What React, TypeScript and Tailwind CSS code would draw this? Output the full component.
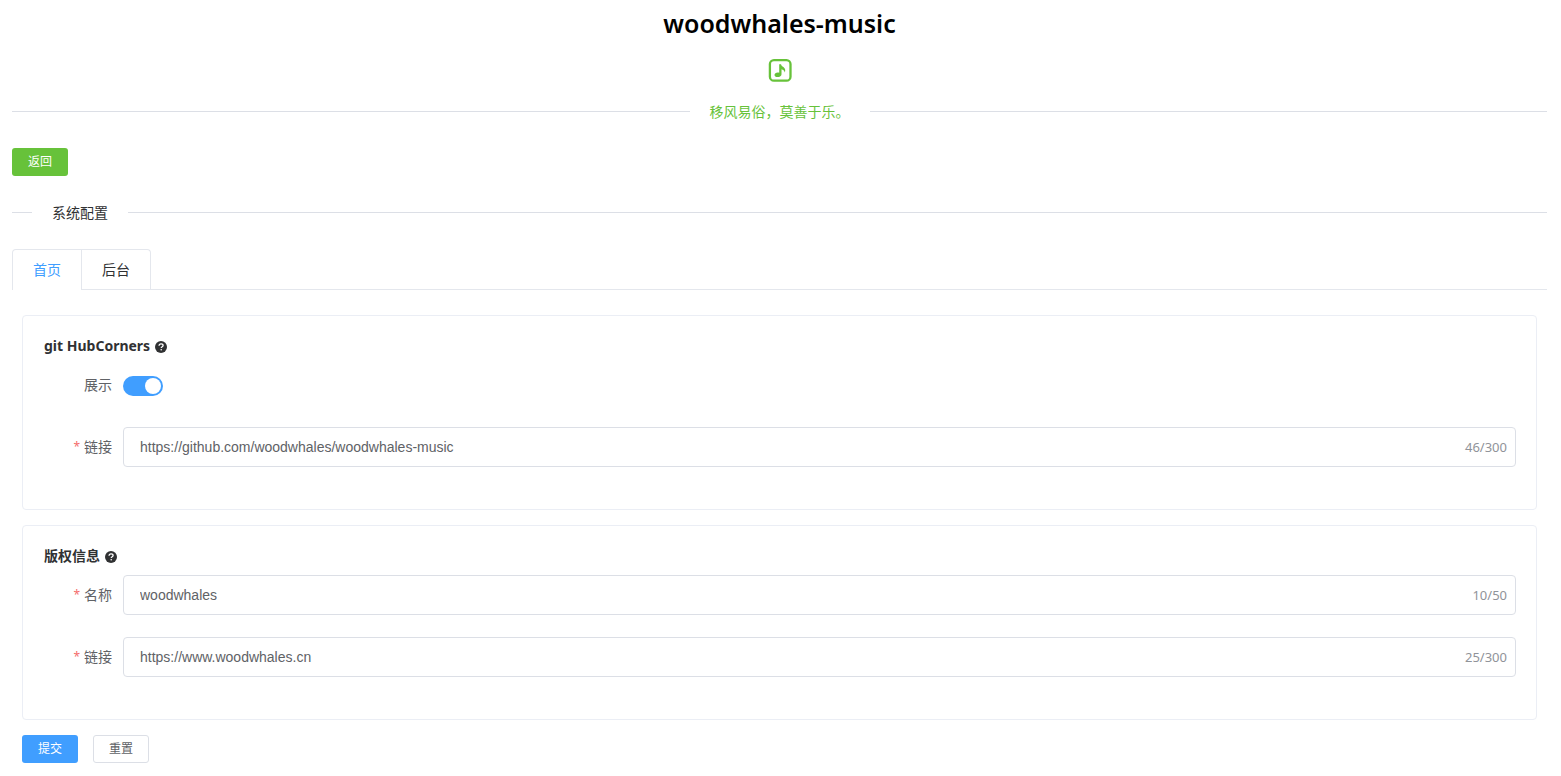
import { useState } from "react";
import type { ReactNode } from "react";

function MusicIcon() {
  return (
    <svg viewBox="0 0 24 24" className="size-6" fill="none" aria-hidden="true">
      <rect x="1.900" y="2.100" width="20.600" height="20.600" rx="4" stroke="#67c23a" strokeWidth="2.300" />
      <path
        d="M11.200 6.200h1.800c.4 1.500 1.300 2 2.400 2.900 1.900 1.500 2.300 3.400 1.400 5.300-.4-1.700-1.700-2.700-3.300-3.100v4.900c0 1.700-1.700 2.900-3.900 2.900-1.900 0-3.100-.8-3.100-2.100 0-1.500 1.500-2.400 3.200-2.400.5 0 1 .1 1.500.200z"
        fill="#67c23a"
      />
    </svg>
  );
}

function HelpIcon() {
  return (
    <svg viewBox="0 0 12 12" className="size-3" aria-hidden="true">
      <circle cx="6" cy="6" r="6" fill="#303133" />
      <path
        d="M4 4.800C4.100 3.500 4.900 2.800 6.100 2.800c1.200 0 2 .7 2 1.700 0 1.300-1.900 1.300-1.900 2.600"
        fill="none"
        stroke="#fff"
        strokeWidth="1.300"
      />
      <circle cx="6.200" cy="8.800" r=".8" fill="#fff" />
    </svg>
  );
}

function Panel({ title, children }: { title: string; children: ReactNode }) {
  return (
    <section className="rounded border border-[#ebeef5] p-5">
      <h2 className="flex h-[29px] items-start gap-[5px] pl-px text-sm leading-5 font-bold text-[#303133]">
        <span>{title}</span>
        <span className="flex h-[22px] items-center">
          <HelpIcon />
        </span>
      </h2>
      {children}
    </section>
  );
}

function Row({ id, label, required, children }: { id: string; label: string; required?: boolean; children: ReactNode }) {
  return (
    <div className="mb-[22px] flex h-10 items-center">
      <label htmlFor={id} className="flex w-20 shrink-0 justify-end gap-1 pr-[11px] text-sm leading-10 text-[#606266]">
        {required && <span className="text-xs leading-10 text-[#f56c6c]">*</span>}
        {label}
      </label>
      {children}
    </div>
  );
}

function TextRow({ id, label, initial, max }: { id: string; label: string; initial: string; max: number }) {
  const [value, setValue] = useState(initial);
  return (
    <Row id={id} label={label} required>
      <div className="flex h-10 flex-1 items-center rounded border border-[#dcdfe6] bg-white pr-2 pl-4 focus-within:border-[#409eff]">
        <input
          id={id}
          value={value}
          maxLength={max}
          onChange={(e) => setValue(e.target.value)}
          className="min-w-0 flex-1 font-['Liberation_Sans',Arial,sans-serif] text-sm text-[#606266] outline-none"
        />
        <span className="text-[13px] leading-5 text-[#909399]">
          {value.length}/{max}
        </span>
      </div>
    </Row>
  );
}

export default function App() {
  const [tab, setTab] = useState(0);
  const [shown, setShown] = useState(true);
  return (
    <main className="bg-white pr-[14px] pb-3 pl-3 font-['Noto_Sans','Noto_Sans_CJK_SC',sans-serif] text-sm text-[#303133]">
      <header className="flex flex-col items-center">
        <h1 className="pt-[3px] text-[25px] leading-10 font-semibold text-black">woodwhales-music</h1>
        <div className="mt-[15px]">
          <MusicIcon />
        </div>
        <div className="mt-[19px] flex h-5 w-full items-center">
          <span className="h-px flex-1 bg-[#dcdfe6]" />
          <p className="px-5 pt-0.5 leading-5 text-[#67c23a]">移风易俗，莫善于乐。</p>
          <span className="h-px flex-1 bg-[#dcdfe6]" />
        </div>
      </header>

      <button type="button" className="mt-[27px] block h-7 w-14 rounded-[3px] bg-[#67c23a] text-xs text-white">
        返回
      </button>

      <div className="mt-[26px] flex h-5 items-center">
        <span className="h-px w-5 bg-[#dcdfe6]" />
        <span className="px-5 pt-0.5 leading-5">系统配置</span>
        <span className="h-px flex-1 bg-[#dcdfe6]" />
      </div>

      <div className="mt-[27px] flex h-[41px]" role="tablist">
        <div className="flex rounded-t border-x border-t border-[#e4e7ed]">
          {["首页", "后台"].map((name, i) => (
            <button
              key={name}
              type="button"
              role="tab"
              aria-selected={tab === i}
              onClick={() => setTab(i)}
              className={`h-10 border-b px-5 ${i > 0 ? "border-l border-l-[#e4e7ed]" : ""} ${
                tab === i ? "border-b-white text-[#409eff]" : "border-b-[#e4e7ed]"
              }`}
            >
              {name}
            </button>
          ))}
        </div>
        <div className="flex-1 border-b border-[#e4e7ed]" />
      </div>

      <form className="px-[10px] pt-[25px]" onSubmit={(e) => e.preventDefault()}>
        <div className="flex flex-col gap-[15px]">
          <Panel title="git HubCorners">
            <Row id="show-corner" label="展示">
              <input
                id="show-corner"
                type="checkbox"
                role="switch"
                checked={shown}
                onChange={(e) => setShown(e.target.checked)}
                className="mt-0.5 flex h-5 w-10 appearance-none items-center rounded-full bg-[#dcdfe6] px-0.5 before:size-4 before:rounded-full before:bg-white checked:justify-end checked:bg-[#409eff]"
              />
            </Row>
            <TextRow id="corner-link" label="链接" initial="https://github.com/woodwhales/woodwhales-music" max={300} />
          </Panel>
          <Panel title="版权信息">
            <TextRow id="owner-name" label="名称" initial="woodwhales" max={50} />
            <TextRow id="owner-link" label="链接" initial="https://www.woodwhales.cn" max={300} />
          </Panel>
        </div>
        <div className="mt-[15px] flex gap-[15px]">
          <button type="submit" className="h-7 w-14 rounded-[3px] bg-[#409eff] text-xs text-white">
            提交
          </button>
          <button type="reset" className="h-7 w-14 rounded-[3px] border border-[#dcdfe6] text-xs text-[#606266]">
            重置
          </button>
        </div>
      </form>
    </main>
  );
}
